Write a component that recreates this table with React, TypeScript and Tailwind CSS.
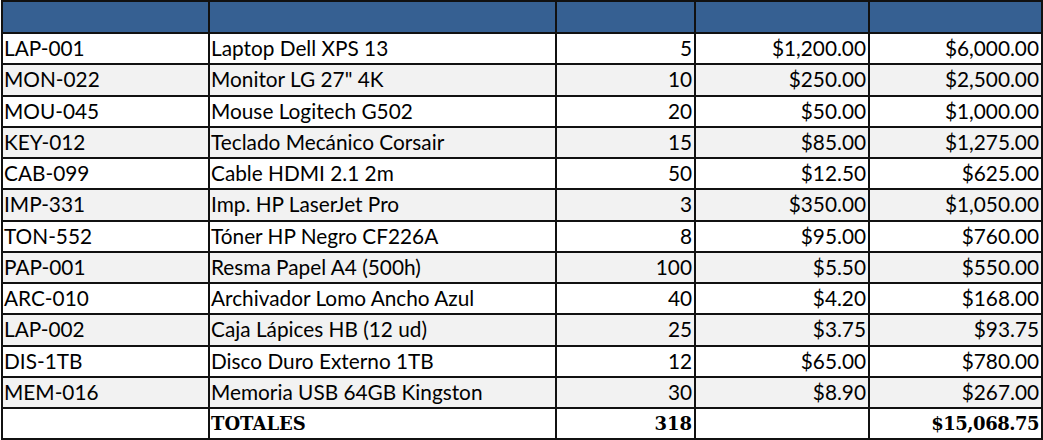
import React from "react";

type Row = { code: string; name: string; qty: number; price: string; total: string };

const rows: Row[] = [
  { code: "LAP-001", name: "Laptop Dell XPS 13", qty: 5, price: "$1,200.00", total: "$6,000.00" },
  { code: "MON-022", name: 'Monitor LG 27" 4K', qty: 10, price: "$250.00", total: "$2,500.00" },
  { code: "MOU-045", name: "Mouse Logitech G502", qty: 20, price: "$50.00", total: "$1,000.00" },
  { code: "KEY-012", name: "Teclado Mecánico Corsair", qty: 15, price: "$85.00", total: "$1,275.00" },
  { code: "CAB-099", name: "Cable HDMI 2.1 2m", qty: 50, price: "$12.50", total: "$625.00" },
  { code: "IMP-331", name: "Imp. HP LaserJet Pro", qty: 3, price: "$350.00", total: "$1,050.00" },
  { code: "TON-552", name: "Tóner HP Negro CF226A", qty: 8, price: "$95.00", total: "$760.00" },
  { code: "PAP-001", name: "Resma Papel A4 (500h)", qty: 100, price: "$5.50", total: "$550.00" },
  { code: "ARC-010", name: "Archivador Lomo Ancho Azul", qty: 40, price: "$4.20", total: "$168.00" },
  { code: "LAP-002", name: "Caja Lápices HB (12 ud)", qty: 25, price: "$3.75", total: "$93.75" },
  { code: "DIS-1TB", name: "Disco Duro Externo 1TB", qty: 12, price: "$65.00", total: "$780.00" },
  { code: "MEM-016", name: "Memoria USB 64GB Kingston", qty: 30, price: "$8.90", total: "$267.00" },
];

const cell = "border-2 border-[#111] pl-px pr-[2px] py-0 leading-none";

export default function App() {
  return (
    <div className="w-[1043px] h-[440px] bg-white overflow-hidden pl-px">
      <table
        className="border-collapse table-fixed text-[20.8px] text-black"
        style={{ fontFamily: "Lato, 'Liberation Sans', sans-serif" }}
      >
        <colgroup>
          <col className="w-[207px]" />
          <col className="w-[347px]" />
          <col className="w-[139px]" />
          <col className="w-[174px]" />
          <col className="w-[173px]" />
        </colgroup>
        <thead>
          <tr className="h-[32px] bg-[#366092]">
            <th className={cell}></th>
            <th className={cell}></th>
            <th className={cell}></th>
            <th className={cell}></th>
            <th className={cell}></th>
          </tr>
        </thead>
        <tbody>
          {rows.map((r, i) => (
            <tr key={r.code} className={`h-[31.25px] ${i % 2 === 1 ? "bg-[#f2f2f2]" : "bg-white"}`}>
              <td className={`${cell} text-left`}>{r.code}</td>
              <td className={`${cell} text-left`}>{r.name}</td>
              <td className={`${cell} text-right`}>{r.qty}</td>
              <td className={`${cell} text-right`}>{r.price}</td>
              <td className={`${cell} text-right`}>{r.total}</td>
            </tr>
          ))}
          <tr
            className="h-[31.25px] bg-white font-bold text-[18px]"
            style={{ fontFamily: "'DejaVu Serif', 'Liberation Serif', serif" }}
          >
            <td className={cell}></td>
            <td className={`${cell} text-left`}>TOTALES</td>
            <td className={`${cell} text-right`}>318</td>
            <td className={cell}></td>
            <td className={`${cell} text-right tracking-[-0.5px]`}>$15,068.75</td>
          </tr>
        </tbody>
      </table>
    </div>
  );
}
